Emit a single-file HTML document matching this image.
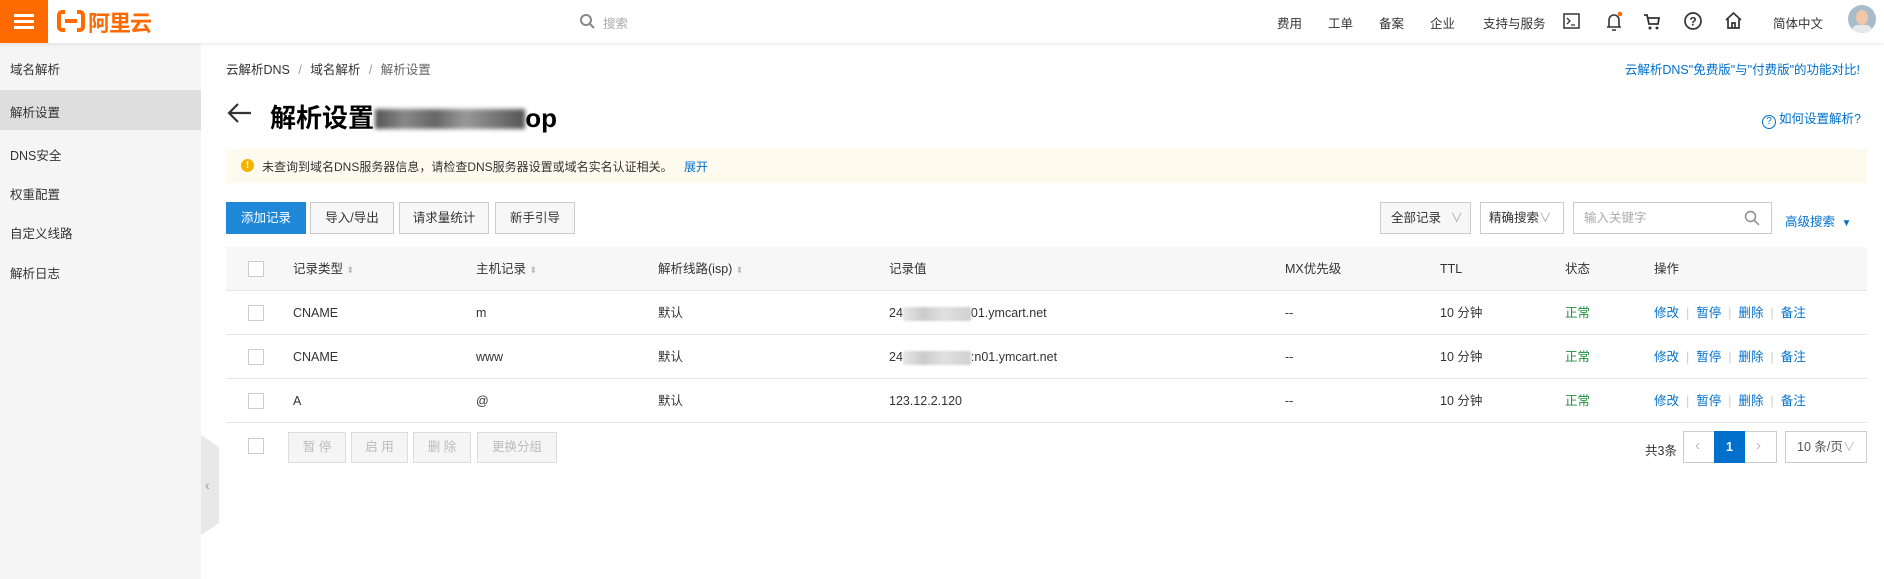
<!DOCTYPE html><html><head><meta charset="utf-8"><style>
*{margin:0;padding:0;box-sizing:border-box}
body{width:1884px;height:579px;overflow:hidden;background:#fff;font-family:"Liberation Sans","Noto Sans CJK SC",sans-serif;font-size:12.5px;color:#333;position:relative}
.a{position:absolute;white-space:nowrap}
.hdr{position:absolute;left:0;top:0;width:1884px;height:43px;background:#fff;box-shadow:0 1px 4px rgba(0,0,0,.1);z-index:2}
.side{position:absolute;left:0;top:43px;width:201px;height:536px;background:#f5f5f5}
.btn{position:absolute;top:202px;height:32px;border:1px solid #ccc;background:#f7f7f7;line-height:30px;text-align:center;font-size:12.5px;color:#333}
.row{position:absolute;left:226px;width:1641px;height:44px;border-bottom:1px solid #e5e5e5}
.cb{position:absolute;left:22px;top:14px;width:16px;height:16px;border:1px solid #ccc;background:#fff}
.c{position:absolute;top:0;line-height:44px;font-size:12.5px;color:#333}
.blue{color:#0070cc}
.ops{color:#0070cc}.ops i{color:#ccc;font-style:normal;margin:0 7px}
.blur{display:inline-block;width:68px;height:14px;background:linear-gradient(90deg,#e6e6e6,#ccc 30%,#e0e0e0 60%,#d0d0d0);vertical-align:middle;filter:blur(1px)}
.bb{position:absolute;top:432px;height:31px;border:1px solid #ddd;background:#f5f5f5;color:#bbb;line-height:29px;text-align:center;font-size:12.5px}
</style></head><body>
<div class="hdr">
 <div class="a" style="left:0;top:0;width:48px;height:43px;background:#ff6a00">
  <div style="position:absolute;left:14px;top:14px;width:20px;height:3px;background:#fff"></div>
  <div style="position:absolute;left:14px;top:20px;width:20px;height:3px;background:#fff"></div>
  <div style="position:absolute;left:14px;top:26px;width:20px;height:3px;background:#fff"></div>
 </div>
 <div class="a" style="left:57px;top:10px;width:28px;height:22px;border:4px solid #ff6a00;border-radius:5px"></div>
 <div class="a" style="left:65px;top:6px;width:12px;height:30px;background:#fff"></div>
 <div class="a" style="left:65px;top:19px;width:12px;height:4px;background:#ff6a00"></div>
 <div class="a" style="left:88px;top:6px;font-size:22px;font-weight:bold;color:#ff6a00;letter-spacing:-1px">阿里云</div>
 <svg class="a" style="left:579px;top:13px" width="16" height="16" viewBox="0 0 16 16"><circle cx="7" cy="7" r="5" fill="none" stroke="#888" stroke-width="2"/><path d="M11 11l4 4" stroke="#888" stroke-width="2"/></svg>
 <div class="a" style="left:603px;top:13px;color:#aaa;font-size:12.5px">搜索</div>
 <div class="a" style="left:1277px;top:13px">费用</div>
 <div class="a" style="left:1328px;top:13px">工单</div>
 <div class="a" style="left:1379px;top:13px">备案</div>
 <div class="a" style="left:1430px;top:13px">企业</div>
 <div class="a" style="left:1483px;top:13px">支持与服务</div>
 <svg class="a" style="left:1563px;top:13px" width="18" height="17"><rect x="1" y="1" width="15" height="14" fill="none" stroke="#333" stroke-width="1.5"/><path d="M4 5l3 3-3 3M8 12h4" stroke="#333" fill="none" stroke-width="1.3"/></svg>
 <svg class="a" style="left:1605px;top:10px" width="18" height="22"><path d="M4 17V10a5 5 0 0 1 10 0v7zM2 17h14M7 20h4" stroke="#333" fill="none" stroke-width="1.6"/><circle cx="15" cy="4" r="2.3" fill="#ff6a00"/></svg>
 <svg class="a" style="left:1643px;top:13px" width="18" height="18"><path d="M1 2h3l2 9h9l1-6H5" stroke="#333" fill="none" stroke-width="1.8"/><circle cx="7" cy="15" r="1.5" fill="#333"/><circle cx="14" cy="15" r="1.5" fill="#333"/></svg>
 <svg class="a" style="left:1683px;top:11px" width="20" height="20"><circle cx="10" cy="10" r="8" fill="none" stroke="#333" stroke-width="1.7"/><text x="10" y="14.5" font-size="12" text-anchor="middle" font-family="Liberation Sans" font-weight="bold" fill="#333">?</text></svg>
 <svg class="a" style="left:1724px;top:11px" width="19" height="19"><path d="M2 9l7.5-7 7.5 7M4 8v9h11V8M8 17v-5h3v5" stroke="#333" fill="none" stroke-width="1.7"/></svg>
 <div class="a" style="left:1773px;top:13px">简体中文</div>
 <div class="a" style="left:1848px;top:5px;width:28px;height:28px;border-radius:50%;background:#a9bccb;overflow:hidden"><div style="position:absolute;left:8px;top:5px;width:12px;height:15px;border-radius:50%;background:#f0c8a8"></div><div style="position:absolute;left:4px;top:20px;width:20px;height:10px;background:#e8e8e8;border-radius:6px 6px 0 0"></div></div>
</div>
<div class="side">
 <div class="a" style="left:10px;top:16px">域名解析</div>
 <div class="a" style="left:0;top:47px;width:201px;height:40px;background:#dedede"></div>
 <div class="a" style="left:10px;top:59px">解析设置</div>
 <div class="a" style="left:10px;top:102px">DNS安全</div>
 <div class="a" style="left:10px;top:141px">权重配置</div>
 <div class="a" style="left:10px;top:180px">自定义线路</div>
 <div class="a" style="left:10px;top:220px">解析日志</div>
</div>
<div class="a" style="left:201px;top:435px;width:18px;height:100px;background:#e8e8e8;clip-path:polygon(0 0,100% 12%,100% 88%,0 100%)"></div>
<div class="a" style="left:205px;top:477px;color:#999;font-size:14px">‹</div>

<div class="a" style="left:226px;top:59px">云解析DNS <span style="color:#999;margin:0 5px">/</span> 域名解析 <span style="color:#999;margin:0 5px">/</span> <span style="color:#666">解析设置</span></div>
<div class="a blue" style="right:24px;top:59px">云解析DNS"免费版"与"付费版"的功能对比!</div>
<svg class="a" style="left:227px;top:102px" width="26" height="22"><path d="M24 11H3M11 2l-9 9 9 9" stroke="#333" fill="none" stroke-width="2.2"/></svg>
<div class="a" style="left:270px;top:98px;font-size:26px;font-weight:bold;color:#000">解析设置 <span style="display:inline-block;width:150px;height:20px;background:linear-gradient(90deg,#555,#888 20%,#666 40%,#999 60%,#777 80%,#555);filter:blur(2px);vertical-align:-2px;margin-left:-6px"></span>op</div>
<div class="a blue" style="left:1762px;top:108px"><span style="display:inline-block;width:14px;height:14px;border:1px solid #0070cc;border-radius:50%;font-size:10px;text-align:center;line-height:12px;vertical-align:-1px;margin-right:3px">?</span>如何设置解析?</div>
<div class="a" style="left:226px;top:149px;width:1641px;height:34px;background:#fefbee"></div>
<div class="a" style="left:241px;top:159px;width:13px;height:13px;border-radius:50%;background:#f5b300;color:#fff;font-size:10px;text-align:center;line-height:13px;font-weight:bold">!</div>
<div class="a" style="left:262px;top:158px;font-size:12px">未查询到域名DNS服务器信息，请检查DNS服务器设置或域名实名认证相关。 <span class="blue" style="margin-left:8px">展开</span></div>

<div class="btn" style="left:226px;width:80px;background:#1f88d8;border-color:#1f88d8;color:#fff">添加记录</div>
<div class="btn" style="left:310px;width:84px">导入/导出</div>
<div class="btn" style="left:399px;width:90px">请求量统计</div>
<div class="btn" style="left:495px;width:80px">新手引导</div>
<div class="btn" style="left:1380px;width:91px;text-align:left;padding-left:10px">全部记录 <span style="color:#aaa;margin-left:6px">∨</span></div>
<div class="btn" style="left:1480px;width:84px;background:#fff;text-align:left;padding-left:8px">精确搜索<span style="color:#aaa">∨</span></div>
<div class="btn" style="left:1573px;width:199px;background:#fff;text-align:left;padding-left:10px;color:#aaa">输入关键字</div>
<svg class="a" style="left:1744px;top:210px" width="16" height="16"><circle cx="6.5" cy="6.5" r="5" fill="none" stroke="#888" stroke-width="1.4"/><path d="M10 10l5 5" stroke="#888" stroke-width="1.4"/></svg>
<div class="a blue" style="left:1785px;top:211px">高级搜索 <span style="font-size:10px;margin-left:3px">▼</span></div>

<div class="row" style="top:247px;background:#f7f7f7">
 <div class="cb"></div>
 <div class="c" style="left:67px">记录类型 <span style="color:#bbb;font-size:9px">⬍</span></div>
 <div class="c" style="left:250px">主机记录 <span style="color:#bbb;font-size:9px">⬍</span></div>
 <div class="c" style="left:432px">解析线路(isp) <span style="color:#bbb;font-size:9px">⬍</span></div>
 <div class="c" style="left:663px">记录值</div>
 <div class="c" style="left:1059px">MX优先级</div>
 <div class="c" style="left:1214px">TTL</div>
 <div class="c" style="left:1339px">状态</div>
 <div class="c" style="left:1428px">操作</div>
</div>
<div class="row" style="top:291px">
 <div class="cb"></div><div class="c" style="left:67px">CNAME</div><div class="c" style="left:250px">m</div><div class="c" style="left:432px">默认</div>
 <div class="c" style="left:663px">24<span class="blur"></span>01.ymcart.net</div><div class="c" style="left:1059px">--</div><div class="c" style="left:1214px">10 分钟</div><div class="c" style="left:1339px;color:#1e8e3e">正常</div>
 <div class="c ops" style="left:1428px">修改<i>|</i>暂停<i>|</i>删除<i>|</i>备注</div>
</div>
<div class="row" style="top:335px">
 <div class="cb"></div><div class="c" style="left:67px">CNAME</div><div class="c" style="left:250px">www</div><div class="c" style="left:432px">默认</div>
 <div class="c" style="left:663px">24<span class="blur"></span>:n01.ymcart.net</div><div class="c" style="left:1059px">--</div><div class="c" style="left:1214px">10 分钟</div><div class="c" style="left:1339px;color:#1e8e3e">正常</div>
 <div class="c ops" style="left:1428px">修改<i>|</i>暂停<i>|</i>删除<i>|</i>备注</div>
</div>
<div class="row" style="top:379px">
 <div class="cb"></div><div class="c" style="left:67px">A</div><div class="c" style="left:250px">@</div><div class="c" style="left:432px">默认</div>
 <div class="c" style="left:663px">123.12.2.120</div><div class="c" style="left:1059px">--</div><div class="c" style="left:1214px">10 分钟</div><div class="c" style="left:1339px;color:#1e8e3e">正常</div>
 <div class="c ops" style="left:1428px">修改<i>|</i>暂停<i>|</i>删除<i>|</i>备注</div>
</div>
<div class="a" style="left:248px;top:438px;width:16px;height:16px;border:1px solid #ccc"></div>
<div class="bb" style="left:288px;width:58px">暂 停</div>
<div class="bb" style="left:351px;width:57px">启 用</div>
<div class="bb" style="left:413px;width:58px">删 除</div>
<div class="bb" style="left:477px;width:80px">更换分组</div>
<div class="a" style="left:1645px;top:440px">共3条</div>
<div class="a" style="left:1683px;top:431px;width:94px;height:32px;border:1px solid #ccc"></div>
<div class="a" style="left:1695px;top:437px;color:#bbb;font-size:15px">‹</div>
<div class="a" style="left:1714px;top:431px;width:31px;height:32px;background:#0070cc;color:#fff;text-align:center;line-height:32px;font-weight:bold">1</div>
<div class="a" style="left:1756px;top:437px;color:#bbb;font-size:15px">›</div>
<div class="a" style="left:1785px;top:431px;width:82px;height:32px;border:1px solid #ccc;line-height:30px;padding-left:11px;color:#555">10 条/页<span style="color:#bbb">∨</span></div>
</body></html>
